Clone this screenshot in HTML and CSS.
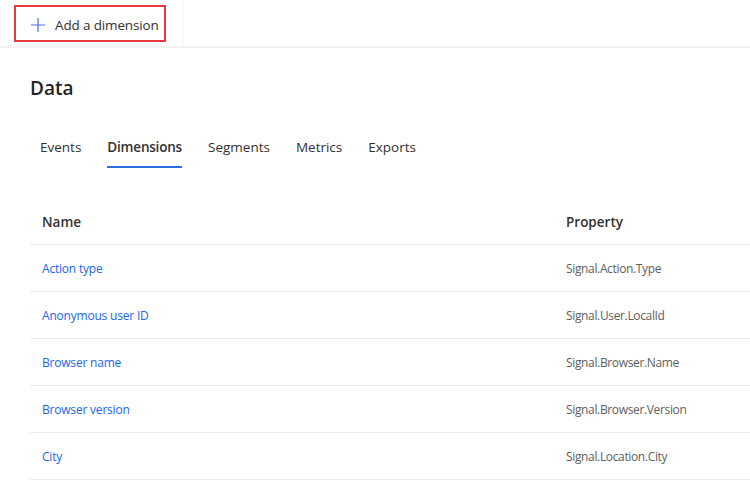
FILE: index.html
```html
<!DOCTYPE html>
<html>
<head>
<meta charset="utf-8">
<link rel="stylesheet" href="styles.css">
</head>
<body>
<div class="topbar">
  <div class="cmd-wrap">
    <button class="cmd">
      <svg class="plus" width="16" height="16" viewBox="0 0 16 16"><path d="M8 1v14M1 8h14" stroke="#4f6bed" stroke-width="1.2" fill="none"/></svg>
      <span>Add a dimension</span>
    </button>
  </div>
</div>
<main class="content">
  <h1 class="title">Data</h1>
  <nav class="tabs">
    <span class="tab">Events</span>
    <span class="tab active">Dimensions</span>
    <span class="tab">Segments</span>
    <span class="tab">Metrics</span>
    <span class="tab">Exports</span>
  </nav>
  <div class="table">
    <div class="row head"><div class="c1">Name</div><div class="c2">Property</div></div>
    <div class="row"><div class="c1 link">Action type</div><div class="c2 prop">Signal.Action.Type</div></div>
    <div class="row"><div class="c1 link">Anonymous user ID</div><div class="c2 prop">Signal.User.LocalId</div></div>
    <div class="row"><div class="c1 link">Browser name</div><div class="c2 prop">Signal.Browser.Name</div></div>
    <div class="row"><div class="c1 link">Browser version</div><div class="c2 prop">Signal.Browser.Version</div></div>
    <div class="row"><div class="c1 link">City</div><div class="c2 prop">Signal.Location.City</div></div>
  </div>
</main>
</body>
</html>
```
FILE: styles.css
```css
html, body { margin: 0; padding: 0; background: #fff; }
body { font-family: "Open Sans", "Noto Sans", sans-serif; color: #323130; width: 750px; height: 482px; overflow: hidden; }
.topbar { height: 46px; border-bottom: 2px solid #f3f2f1; display: flex; align-items: flex-start; padding-left: 8px; }
.cmd-wrap { height: 46px; width: 176px; border-left: 1px solid #f6f6f6; border-right: 1px solid #f6f6f6; box-sizing: border-box; padding: 5px 0 0 5px; }
.cmd { display: flex; align-items: center; gap: 9px; box-sizing: border-box; height: 37px; width: 152px; border: 2px solid #e8393f; background: #fff; padding: 3px 0 0 14px; font-family: inherit; font-size: 13.5px; letter-spacing: -0.15px; color: #323130; margin: 0; }
.plus { flex: none; }
.content { padding: 0 0 0 30px; }
.title { margin: 0; padding-top: 27px; font-size: 19px; font-weight: 600; line-height: 26px; color: #252423; }
.tabs { display: flex; gap: 26px; margin-top: 36px; padding-left: 10px; }
.tab { font-size: 13.5px; line-height: 20px; padding-bottom: 9px; border-bottom: 2px solid transparent; color: #323130; }
.tab.active { font-weight: 600; border-bottom-color: #2f6de1; letter-spacing: -0.2px; }
.table { margin-top: 31px; }
.row { display: flex; align-items: center; height: 46px; border-bottom: 1px solid #edebe9; padding-left: 12px; }
.row.head { height: 45px; font-weight: 600; font-size: 13.5px; color: #323130; }
.c1 { width: 524px; }
.link { color: #2266e3; font-size: 12px; letter-spacing: -0.2px; }
.prop { color: #605e5c; font-size: 12px; letter-spacing: -0.35px; }
```
